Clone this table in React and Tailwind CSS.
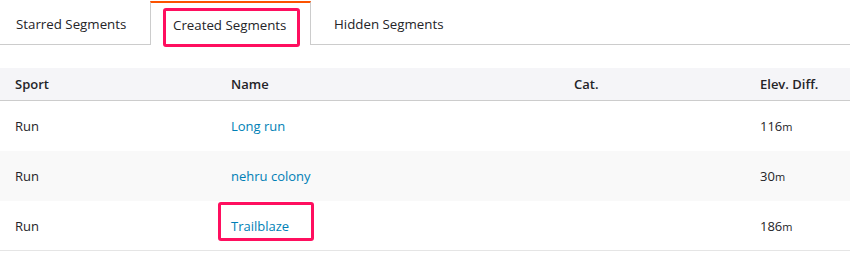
export default function App() {
  const rows = [
    { sport: "Run", name: "Long run", elev: "116", bg: "bg-white" },
    { sport: "Run", name: "nehru colony", elev: "30", bg: "bg-[#f9f9f9]" },
    { sport: "Run", name: "Trailblaze", elev: "186", bg: "bg-white", mark: true },
  ];
  return (
    <div className="w-[850px] h-[261px] bg-white text-[13px] text-[#242428]" style={{ fontFamily: '"Open Sans", "Noto Sans", sans-serif' }}>
      <div className="flex h-[45px] border-b border-[#cccccc] text-[13.3px]">
        <div className="w-[150px] pl-[16px] flex items-center pt-[6px]">Starred Segments</div>
        <div className="relative w-[161px] -mb-px bg-white border-x border-t-2 border-x-[#cccccc] border-t-[#fc5200] mt-[1px] pl-[22px] flex items-center pt-[4px]">
          Created Segments
          <div className="absolute left-[12px] top-[5px] w-[137px] h-[39px] border-[3.5px] border-[#ff0f5f] rounded-[3px]" />
        </div>
        <div className="pl-[23px] flex items-center pt-[6px]">Hidden Segments</div>
      </div>
      <div className="mt-[23px]">
        <div className="grid grid-cols-[216px_343px_186px_1fr] pl-[15px] h-[33px] items-center bg-[#f5f5f8] border-b border-[#cccccc] font-semibold pt-[1px]">
          <div>Sport</div>
          <div>Name</div>
          <div>Cat.</div>
          <div>Elev. Diff.</div>
        </div>
        {rows.map((r, i) => (
          <div key={i} className={`grid grid-cols-[216px_343px_186px_1fr] pl-[15px] h-[50px] items-center pt-[2px] ${r.bg} ${i === rows.length - 1 ? "border-b border-[#e5e5e5]" : ""}`}>
            <div>{r.sport}</div>
            <div className="relative">
              <span className="text-[#007fb6]">{r.name}</span>
              {r.mark && (
                <div className="absolute left-[-13px] top-[-15px] w-[96px] h-[39px] border-[3.5px] border-[#ff0f5f] rounded-[3px]" />
              )}
            </div>
            <div></div>
            <div>
              {r.elev}
              <span className="text-[11px]">m</span>
            </div>
          </div>
        ))}
      </div>
    </div>
  );
}
